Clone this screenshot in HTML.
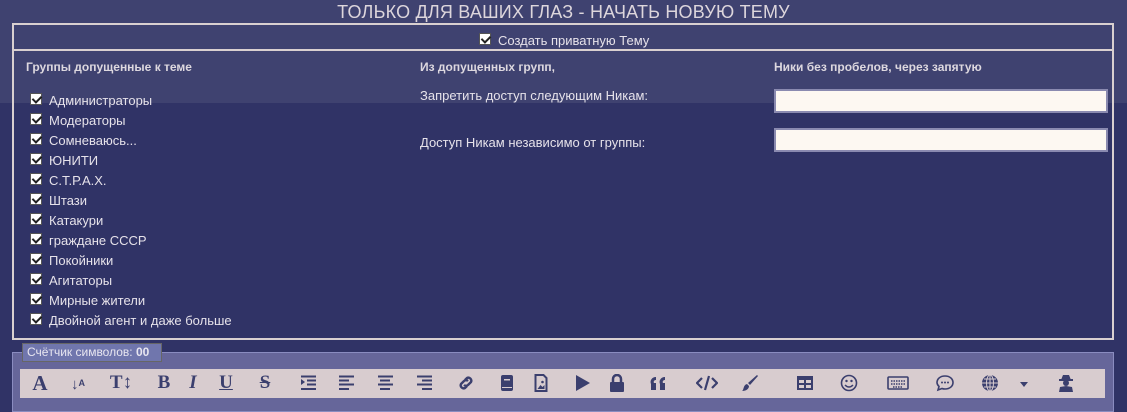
<!DOCTYPE html>
<html><head><meta charset="utf-8"><style>
*{box-sizing:border-box;margin:0;padding:0}
body{width:1127px;height:406px;overflow:hidden;background:#303366;font-family:"Liberation Sans","DejaVu Sans",sans-serif;position:relative;color:#e6e2ea}
.topbg{position:absolute;left:0;top:0;width:1127px;height:103px;background:#3f4270}
.title{position:absolute;top:2px;left:0;width:1127px;text-align:center;font-size:18px;color:#ddd6dc;letter-spacing:0.2px}
.box{position:absolute;left:12px;top:23px;width:1102px;height:317px;border:2px solid #d9d0d0}
.hdr{position:absolute;left:12px;top:23px;width:1102px;height:28px;border-bottom:2px solid #d9d0d0}
.cb{position:absolute;width:12px;height:12px;background:#fff;border:1px solid #555}
.cb:after{content:"";position:absolute;left:3px;top:0px;width:4px;height:7px;border:solid #222;border-width:0 2px 2px 0;transform:rotate(45deg)}
.t{position:absolute;font-size:13px;white-space:nowrap;color:#e6e2ea}
.b{font-weight:bold;font-size:12px;color:#ddd8df}
.inp{position:absolute;left:774px;width:334px;height:24px;background:#fdf8f2;border:2px solid #8a8ab0}
.fs{position:absolute;left:12px;top:352px;width:1102px;height:60px;background:#66669a;border:1px solid #8a8cc0}
.lg{position:absolute;left:22px;top:343px;height:19px;width:140px;background:#7076ad;border:1px solid #666;font-size:12px;color:#e8e6f0;padding:1px 4px}
.tb{position:absolute;left:20px;top:369px;width:1085px;height:29px;background:#d8cccf}
.ic{position:absolute;top:371px;height:24px;color:#3b3f6e;font-weight:bold;font-size:19px;text-align:center;line-height:24px;transform:translateX(-50%)}
.ic svg{vertical-align:middle}
</style></head><body>
<div class="topbg"></div>
<div class="title">ТОЛЬКО ДЛЯ ВАШИХ ГЛАЗ - НАЧАТЬ НОВУЮ ТЕМУ</div>
<div class="box"></div>
<div class="hdr"></div>
<div class="cb" style="left:479px;top:33px"></div>
<div class="t" style="left:498px;top:33px">Создать приватную Тему</div>
<div class="t b" style="left:26px;top:60px">Группы допущенные к теме</div>
<div class="t b" style="left:420px;top:60px">Из допущенных групп,</div>
<div class="t b" style="left:774px;top:60px">Ники без пробелов, через запятую</div>
<div class="t" style="left:420px;top:88px">Запретить доступ следующим Никам:</div>
<div class="t" style="left:420px;top:135px">Доступ Никам независимо от группы:</div>
<div class="inp" style="top:89px"></div>
<div class="inp" style="top:128px"></div>

<div class="cb" style="left:30px;top:93px"></div><div class="t" style="left:49px;top:93px">Администраторы</div>
<div class="cb" style="left:30px;top:113px"></div><div class="t" style="left:49px;top:113px">Модераторы</div>
<div class="cb" style="left:30px;top:133px"></div><div class="t" style="left:49px;top:133px">Сомневаюсь...</div>
<div class="cb" style="left:30px;top:153px"></div><div class="t" style="left:49px;top:153px">ЮНИТИ</div>
<div class="cb" style="left:30px;top:173px"></div><div class="t" style="left:49px;top:173px">С.Т.Р.А.Х.</div>
<div class="cb" style="left:30px;top:193px"></div><div class="t" style="left:49px;top:193px">Штази</div>
<div class="cb" style="left:30px;top:213px"></div><div class="t" style="left:49px;top:213px">Катакури</div>
<div class="cb" style="left:30px;top:233px"></div><div class="t" style="left:49px;top:233px">граждане СССР</div>
<div class="cb" style="left:30px;top:253px"></div><div class="t" style="left:49px;top:253px">Покойники</div>
<div class="cb" style="left:30px;top:273px"></div><div class="t" style="left:49px;top:273px">Агитаторы</div>
<div class="cb" style="left:30px;top:293px"></div><div class="t" style="left:49px;top:293px">Мирные жители</div>
<div class="cb" style="left:30px;top:313px"></div><div class="t" style="left:49px;top:313px">Двойной агент и даже больше</div>

<div class="fs"></div>
<div class="lg">Счётчик символов: <b>00</b></div>
<div class="tb"></div>
<div class="ic" style="left:40px;font-family:'Liberation Serif',serif;font-size:21px">A</div>
<div class="ic" style="left:78px;font-size:15px">↓<span style="font-size:9px;vertical-align:3px">A</span></div>
<div class="ic" style="left:121px;font-family:'Liberation Serif',serif">T↕</div>
<div class="ic" style="left:164px;font-family:'Liberation Serif',serif">B</div>
<div class="ic" style="left:193px;font-family:'Liberation Serif',serif;font-style:italic">I</div>
<div class="ic" style="left:226px;font-family:'Liberation Serif',serif;text-decoration:underline">U</div>
<div class="ic" style="left:265px;font-family:'Liberation Serif',serif;text-decoration:line-through">S</div>
<div class="ic" style="left:308px"><svg width="16" height="16"><path d="M1 4l4 3-4 3z" fill="#3b3f6e"/><path d="M1 1.5h15M7 5.5h9M7 9.5h9M1 14h15" stroke="#3b3f6e" stroke-width="2"/></svg></div>
<div class="ic" style="left:346px"><svg width="16" height="16"><path d="M1 1.5h15M1 5.5h10M1 9.5h15M1 14h10" stroke="#3b3f6e" stroke-width="2"/></svg></div>
<div class="ic" style="left:385px"><svg width="16" height="16"><path d="M1 1.5h15M3 5.5h10M1 9.5h15M3 14h10" stroke="#3b3f6e" stroke-width="2"/></svg></div>
<div class="ic" style="left:424px"><svg width="16" height="16"><path d="M1 1.5h15M6 5.5h10M1 9.5h15M6 14h10" stroke="#3b3f6e" stroke-width="2"/></svg></div>
<div class="ic" style="left:466px"><svg width="18" height="18"><path d="M8 6l2-2a3 3 0 014 4l-3 3a3 3 0 01-4 0M10 12l-2 2a3 3 0 01-4-4l3-3a3 3 0 014 0" fill="none" stroke="#3b3f6e" stroke-width="2.4"/></svg></div>
<div class="ic" style="left:507px"><svg width="14" height="18"><rect x="1" y="1" width="12" height="16" rx="2" fill="#3b3f6e"/><rect x="4" y="5" width="6" height="1.5" fill="#d8cccf"/><rect x="2" y="13" width="10" height="1" fill="#d8cccf"/></svg></div>
<div class="ic" style="left:541px"><svg width="13" height="18"><path d="M1 1h8l3 3v13H1z" fill="none" stroke="#3b3f6e" stroke-width="2"/><circle cx="8" cy="8" r="1.3" fill="#3b3f6e"/><path d="M3 15l3-4 2 2 2-2v4z" fill="#3b3f6e"/></svg></div>
<div class="ic" style="left:583px"><svg width="16" height="18"><path d="M1 1l14 8-14 8z" fill="#3b3f6e"/></svg></div>
<div class="ic" style="left:617px"><svg width="16" height="18"><path d="M4 8V5a4 4 0 018 0v3" fill="none" stroke="#3b3f6e" stroke-width="2.5"/><rect x="1" y="8" width="14" height="10" rx="1" fill="#3b3f6e"/></svg></div>
<div class="ic" style="left:659px"><svg width="18" height="16"><path d="M1 9a5 5 0 015-7v3a2 2 0 00-2 3h2v7H1zM10 9a5 5 0 015-7v3a2 2 0 00-2 3h2v7h-5z" fill="#3b3f6e"/></svg></div>
<div class="ic" style="left:707px"><svg width="22" height="16"><path d="M6 3L1 8l5 5M16 3l5 5-5 5M13 1L9 15" fill="none" stroke="#3b3f6e" stroke-width="2.2"/></svg></div>
<div class="ic" style="left:750px"><svg width="18" height="18"><path d="M16 1l1 1-8 9-2-2z" fill="#3b3f6e"/><path d="M6 10l2 2c0 3-3 5-7 5 2-1 1-6 5-7z" fill="#3b3f6e"/></svg></div>
<div class="ic" style="left:805px"><svg width="18" height="16"><rect x="1" y="1" width="16" height="14" fill="#3b3f6e"/><rect x="3" y="5" width="5" height="3" fill="#d8cccf"/><rect x="10" y="5" width="5" height="3" fill="#d8cccf"/><rect x="3" y="10" width="5" height="3" fill="#d8cccf"/><rect x="10" y="10" width="5" height="3" fill="#d8cccf"/></svg></div>
<div class="ic" style="left:849px"><svg width="18" height="18"><circle cx="9" cy="9" r="7.5" fill="none" stroke="#3b3f6e" stroke-width="1.6"/><circle cx="6.5" cy="7" r="1.2" fill="#3b3f6e"/><circle cx="11.5" cy="7" r="1.2" fill="#3b3f6e"/><path d="M5 11q4 4 8 0" fill="none" stroke="#3b3f6e" stroke-width="1.5"/></svg></div>
<div class="ic" style="left:898px"><svg width="22" height="14"><rect x="1" y="1" width="20" height="12" rx="1" fill="none" stroke="#3b3f6e" stroke-width="1.6"/><path d="M4 5h14M4 8h14M6 11h10" stroke="#3b3f6e" stroke-width="1.5" stroke-dasharray="1.5 1"/></svg></div>
<div class="ic" style="left:945px"><svg width="20" height="18"><path d="M10 2c5 0 8 3 8 6.5s-3 6.5-8 6.5c-1 0-2 0-3-.5L3 16l1-3.5C2.5 11 2 10 2 8.5 2 5 5 2 10 2z" fill="none" stroke="#3b3f6e" stroke-width="1.6"/><circle cx="7" cy="8.5" r="1" fill="#3b3f6e"/><circle cx="10" cy="8.5" r="1" fill="#3b3f6e"/><circle cx="13" cy="8.5" r="1" fill="#3b3f6e"/></svg></div>
<div class="ic" style="left:990px"><svg width="18" height="18"><circle cx="9" cy="9" r="8" fill="#3b3f6e"/><path d="M1 9h16M9 1v16M3 5h12M3 13h12" stroke="#d8cccf" stroke-width="1"/><ellipse cx="9" cy="9" rx="3.5" ry="8" fill="none" stroke="#d8cccf" stroke-width="1"/></svg></div>
<div class="ic" style="left:1024px"><svg width="10" height="18"><path d="M1 8h8l-4 5z" fill="#3b3f6e"/></svg></div>
<div class="ic" style="left:1066px"><svg width="16" height="20"><path d="M3 7l2-5h6l2 5z" fill="#3b3f6e"/><rect x="1" y="6" width="14" height="2" fill="#3b3f6e"/><circle cx="8" cy="10" r="3" fill="#3b3f6e"/><path d="M1 19l1-5 6-1 6 1 1 5z" fill="#3b3f6e"/></svg></div>
</body></html>
